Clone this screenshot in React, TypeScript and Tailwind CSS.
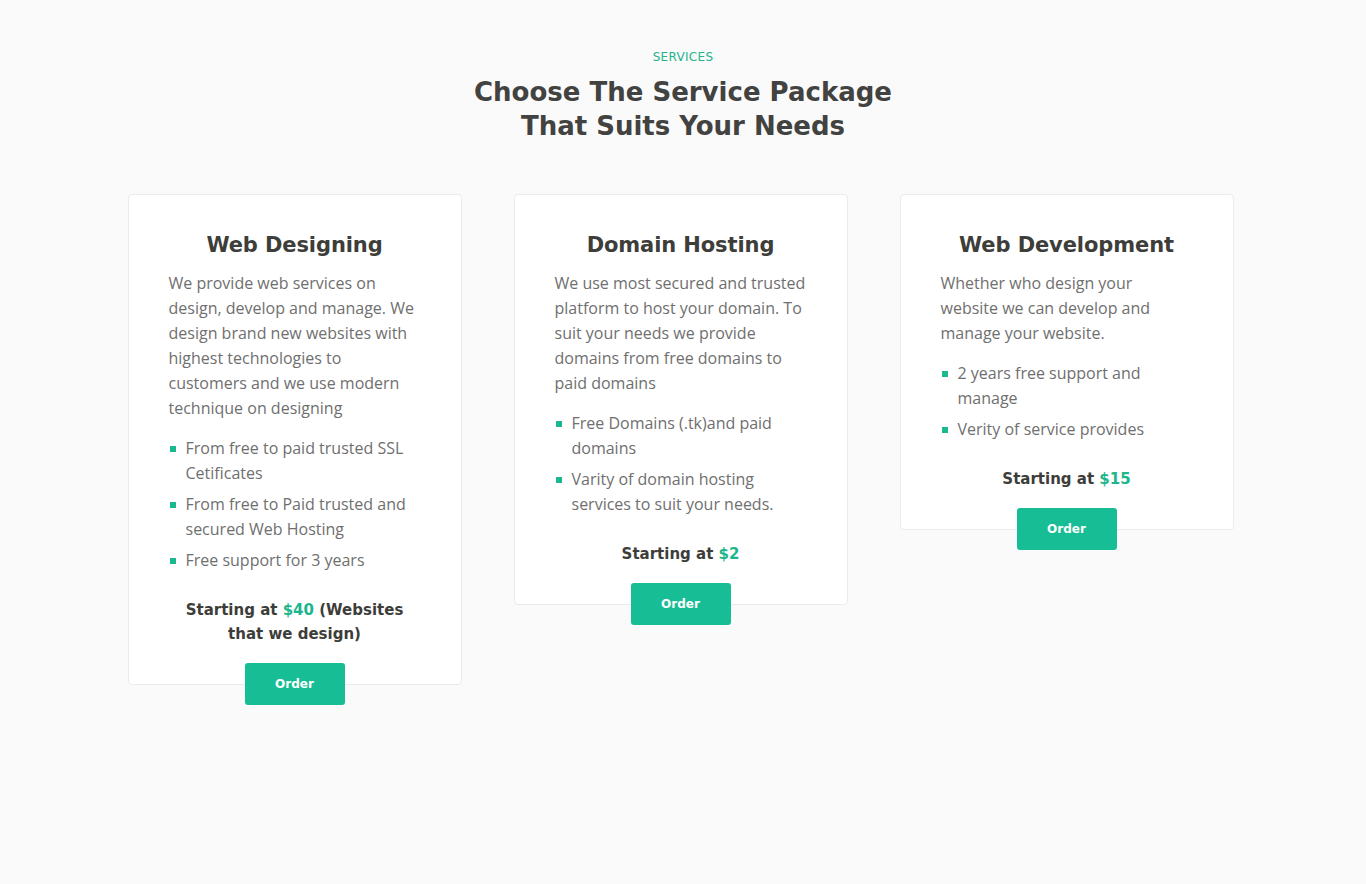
import React from 'react';

type Service = {
  title: string;
  text: string;
  items: string[];
  price: string;
  extra?: string;
};

const services: Service[] = [
  {
    title: 'Web Designing',
    text: 'We provide web services on design, develop and manage. We design brand new websites with highest technologies to customers and we use modern technique on designing',
    items: ['From free to paid trusted SSL Cetificates', 'From free to Paid trusted and secured Web Hosting', 'Free support for 3 years'],
    price: '$40',
    extra: ' (Websites that we design)',
  },
  {
    title: 'Domain Hosting',
    text: 'We use most secured and trusted platform to host your domain. To suit your needs we provide domains from free domains to paid domains',
    items: ['Free Domains (.tk)and paid domains', 'Varity of domain hosting services to suit your needs.'],
    price: '$2',
  },
  {
    title: 'Web Development',
    text: 'Whether who design your website we can develop and manage your website.',
    items: ['2 years free support and manage', 'Verity of service provides'],
    price: '$15',
  },
];

const heading = { fontFamily: '"DejaVu Sans", "Noto Sans", sans-serif' };
const body = { fontFamily: '"Open Sans", "Noto Sans", sans-serif' };

function ServiceCard({ s }: { s: Service }) {
  return (
    <div className="w-[334px] bg-white border border-[#ebebeb] rounded-[4px] flex flex-col items-center pt-[35px] px-[40px]">
      <h3 style={heading} className="text-[21px] font-bold text-[#3d3d3a] tracking-[-0.1px] leading-[30px]">
        {s.title}
      </h3>
      <p style={body} className="mt-[11px] self-stretch text-[16px] leading-[25px] text-[#6f6f6f]">
        {s.text}
      </p>
      <ul style={body} className="mt-[15px] self-stretch flex flex-col gap-[6px]">
        {s.items.map((it) => (
          <li key={it} className="flex text-[16px] leading-[25px] text-[#6f6f6f]">
            <span className="mt-[10px] ml-[1px] mr-[10px] w-[6px] h-[6px] shrink-0 bg-[#19b98f]" />
            <span>{it}</span>
          </li>
        ))}
      </ul>
      <p style={heading} className="mt-[25px] text-center text-[15px] leading-[24px] font-bold text-[#3d3d3a] px-[4px]">
        Starting at <span className="text-[#1db58c]">{s.price}</span>
        {s.extra}
      </p>
      <button
        style={heading}
        className="mt-[17px] -mb-[21px] w-[100px] h-[42px] rounded-[3px] bg-[#16bd95] text-white text-[12px] font-bold"
      >
        Order
      </button>
    </div>
  );
}

export default function App() {
  return (
    <div className="min-h-[884px] bg-[#fafafa] pt-[49px] pb-[100px]">
      <div className="text-center">
        <div style={heading} className="text-[12px] leading-[16px] text-[#22b48b] tracking-[0.3px]">
          SERVICES
        </div>
        <h2 style={heading} className="mt-[10px] text-[26px] leading-[34px] font-bold text-[#424240]">
          Choose The Service Package
          <br />
          That Suits Your Needs
        </h2>
      </div>
      <div className="mt-[51px] flex justify-center items-start gap-[52px] pr-[5px]">
        {services.map((s) => (
          <ServiceCard key={s.title} s={s} />
        ))}
      </div>
    </div>
  );
}
